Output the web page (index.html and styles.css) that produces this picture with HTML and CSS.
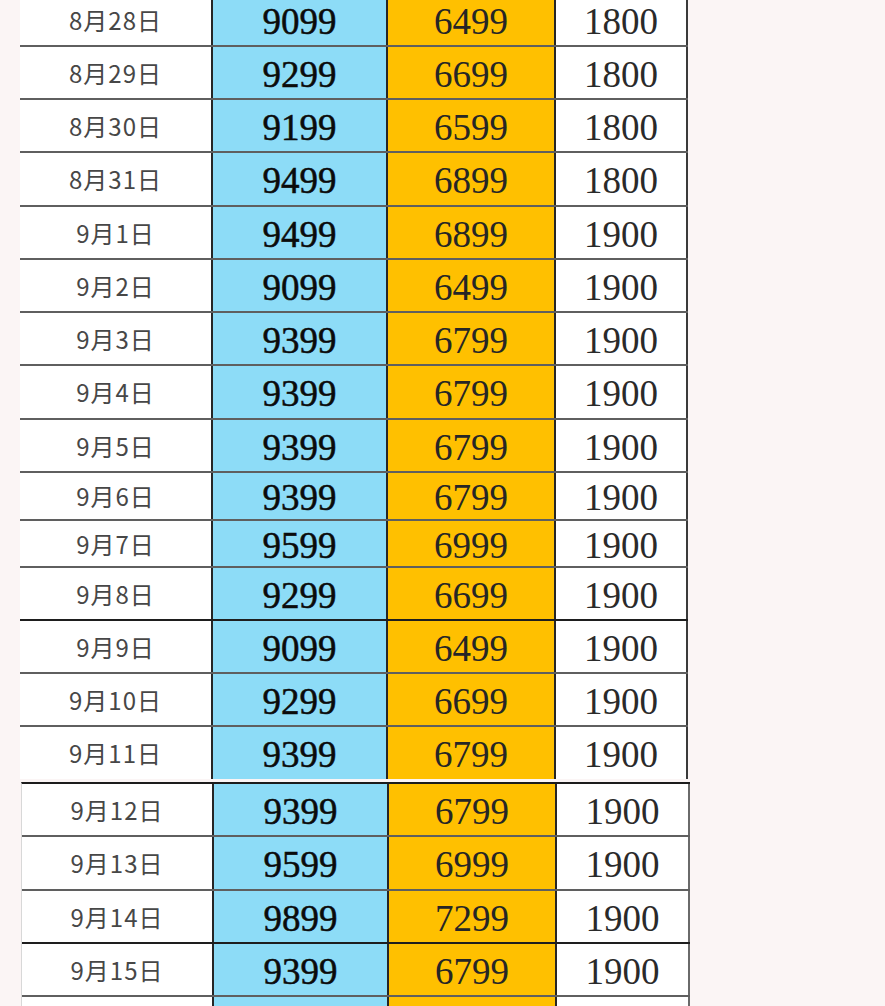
FILE: index.html
```html
<!DOCTYPE html>
<html lang="zh">
<head>
<meta charset="utf-8">
<title>价格表</title>
<link rel="stylesheet" href="styles.css">
</head>
<body>
<div class="page">
  <div class="sheet upper">
    <div class="row"><div class="c date">8月28日</div><div class="c blue">9099</div><div class="c orange">6499</div><div class="c plain">1800</div></div>
    <div class="row"><div class="c date">8月29日</div><div class="c blue">9299</div><div class="c orange">6699</div><div class="c plain">1800</div></div>
    <div class="row"><div class="c date">8月30日</div><div class="c blue">9199</div><div class="c orange">6599</div><div class="c plain">1800</div></div>
    <div class="row tall"><div class="c date">8月31日</div><div class="c blue">9499</div><div class="c orange">6899</div><div class="c plain">1800</div></div>
    <div class="row"><div class="c date">9月1日</div><div class="c blue">9499</div><div class="c orange">6899</div><div class="c plain">1900</div></div>
    <div class="row"><div class="c date">9月2日</div><div class="c blue">9099</div><div class="c orange">6499</div><div class="c plain">1900</div></div>
    <div class="row"><div class="c date">9月3日</div><div class="c blue">9399</div><div class="c orange">6799</div><div class="c plain">1900</div></div>
    <div class="row tall"><div class="c date">9月4日</div><div class="c blue">9399</div><div class="c orange">6799</div><div class="c plain">1900</div></div>
    <div class="row"><div class="c date">9月5日</div><div class="c blue">9399</div><div class="c orange">6799</div><div class="c plain">1900</div></div>
    <div class="row short"><div class="c date">9月6日</div><div class="c blue">9399</div><div class="c orange">6799</div><div class="c plain">1900</div></div>
    <div class="row shorter"><div class="c date">9月7日</div><div class="c blue">9599</div><div class="c orange">6999</div><div class="c plain">1900</div></div>
    <div class="row dark"><div class="c date">9月8日</div><div class="c blue">9299</div><div class="c orange">6699</div><div class="c plain">1900</div></div>
    <div class="row"><div class="c date">9月9日</div><div class="c blue">9099</div><div class="c orange">6499</div><div class="c plain">1900</div></div>
    <div class="row"><div class="c date">9月10日</div><div class="c blue">9299</div><div class="c orange">6699</div><div class="c plain">1900</div></div>
    <div class="row last"><div class="c date">9月11日</div><div class="c blue">9399</div><div class="c orange">6799</div><div class="c plain">1900</div></div>
  </div>
  <div class="sheet lower">
    <div class="row"><div class="c date">9月12日</div><div class="c blue">9399</div><div class="c orange">6799</div><div class="c plain">1900</div></div>
    <div class="row tall"><div class="c date">9月13日</div><div class="c blue">9599</div><div class="c orange">6999</div><div class="c plain">1900</div></div>
    <div class="row dark"><div class="c date">9月14日</div><div class="c blue">9899</div><div class="c orange">7299</div><div class="c plain">1900</div></div>
    <div class="row"><div class="c date">9月15日</div><div class="c blue">9399</div><div class="c orange">6799</div><div class="c plain">1900</div></div>
    <div class="row"><div class="c date"></div><div class="c blue"></div><div class="c orange"></div><div class="c plain"></div></div>
  </div>
</div>
</body>
</html>
```
FILE: styles.css
```css
html, body {
  margin: 0;
  padding: 0;
  background: #fbf5f5;
  height: 100%;
  overflow: hidden;
}

.page {
  display: flex;
  flex-direction: column;
  padding-left: 20px;
}

.sheet {
  display: flex;
  flex-direction: column;
  width: 668px;
  background: #ffffff;
}

.upper {
  margin-top: -6px;
}

.lower {
  margin-top: 3px;
  margin-left: 1px;
  border-top: 2px solid #1c1c1c;
  border-left: 1px solid #d8d8d8;
}

.row {
  display: grid;
  grid-template-columns: 193px 175px 168px 132px;
  height: 53px;
  box-sizing: border-box;
  border-bottom: 2px solid #5f5f5f;
}

.row.tall { height: 54px; }
.row.short { height: 48px; }
.row.shorter { height: 47px; }
.row.dark { border-bottom-color: #1e1e1e; }
.row.last { border-bottom: 0; height: 52px; }

.lower .row {
  grid-template-columns: 192px 175px 168px 133px;
}

.c {
  display: flex;
  align-items: center;
  justify-content: center;
  box-sizing: border-box;
  border-right: 2px solid #262626;
  line-height: 1;
}

.date {
  font-family: "Noto Sans CJK JP", "Noto Sans CJK SC", sans-serif;
  font-size: 24px;
  letter-spacing: 1px;
  color: #474747;
}

.blue, .orange, .plain {
  font-family: "Liberation Serif", "Times New Roman", serif;
  font-size: 37px;
  padding-top: 3px;
}

.blue {
  background: #8ddcf7;
  color: #0b0b0b;
  -webkit-text-stroke: 0.5px #0b0b0b;
}

.orange {
  background: #ffc000;
  color: #262626;
}

.plain {
  background: #ffffff;
  color: #2a2a2a;
  border-right-color: #3a3a3a;
}

.lower .plain {
  border-right-color: #6a6a6a;
}
```
